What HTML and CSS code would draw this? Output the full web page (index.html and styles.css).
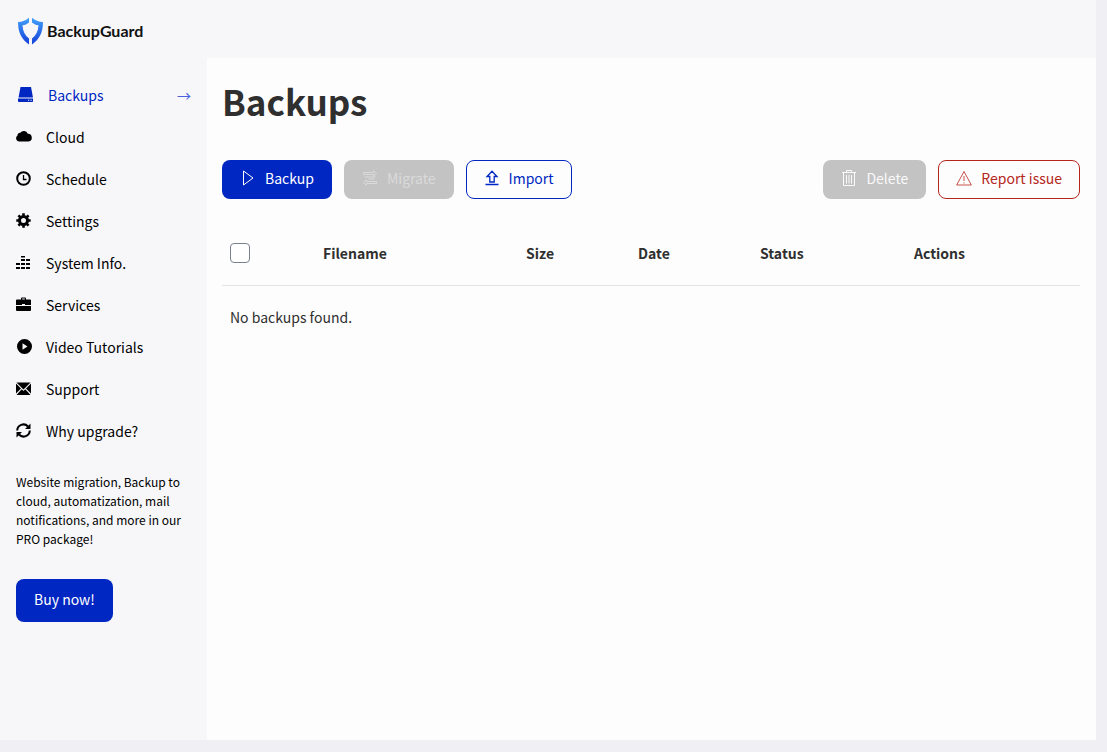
FILE: index.html
```html
<!DOCTYPE html>
<html lang="en">
<head>
  <meta charset="UTF-8">
  <meta name="viewport" content="width=device-width, initial-scale=1">
  <title>BackupGuard - Backups</title>
  <link rel="stylesheet" href="styles.css">
</head>
<body>
  <div class="app">
    <header class="topbar">
      <a class="logo" href="#">
        <svg width="26" height="28" viewBox="0 0 26 28">
          <defs>
            <linearGradient id="shield" x1="0" y1="0" x2="0" y2="1">
              <stop offset="0" stop-color="#41a0fa"/>
              <stop offset="1" stop-color="#1440d8"/>
            </linearGradient>
          </defs>
          <path fill="url(#shield)" d="M12 .8v4.700C10 7.200 8 8 5.500 8.300c.3 6 2.500 10.200 6.500 13.200V27.500C5 22.500 1 16 1 5 5.500 5 9 3.500 12 .8z"/>
          <path fill="url(#shield)" d="M15 .8v4.700c2 1.700 4 2.500 6.500 2.800-.3 6-2.500 10.200-6.500 13.200V27.500C22 22.500 26 16 26 5 21.500 5 18 3.500 15 .8z"/>
        </svg>
        <span>BackupGuard</span>
      </a>
    </header>

    <aside class="sidebar">
      <nav>
        <ul class="menu">
          <li><a class="active" href="#">
            <svg viewBox="0 0 16 16"><path d="M2.500 0h10.500l2 10.500H.5z"/><path fill-rule="evenodd" d="M0 11.500h15v2.700a.8.8 0 0 1-.8.8H.8a.8.8 0 0 1-.8-.8zm10 1.200v1h1.200v-1zm2.500 0v1h1.200v-1z"/></svg>
            <span>Backups</span><span class="arrow">→</span></a></li>
          <li><a href="#">
            <svg viewBox="0 0 16 16"><path d="M3.300 12.500A3.300 3.300 0 0 1 1.500 6.500 2.500 2.500 0 0 1 4.300 3.800 4.300 4.300 0 0 1 11.800 4.700 3.900 3.900 0 0 1 12 12.500z"/></svg>
            <span>Cloud</span></a></li>
          <li><a href="#">
            <svg viewBox="0 0 16 16"><circle cx="7.500" cy="7.500" r="6.300" fill="none" stroke="currentColor" stroke-width="2"/><path fill="none" stroke="currentColor" stroke-width="1.300" d="M7.500 4v4.500h3"/></svg>
            <span>Schedule</span></a></li>
          <li><a href="#">
            <svg viewBox="0 0 16 16"><circle cx="7.500" cy="7.500" r="4" fill="none" stroke="currentColor" stroke-width="3"/><path stroke="currentColor" stroke-width="2.600" d="M7.500.3v2.500M7.500 12.200v2.500M.3 7.500h2.500M12.200 7.500h2.500M2.400 2.400l1.800 1.800M10.800 10.800l1.800 1.800M2.400 12.600l1.800-1.800M10.800 4.200l1.800-1.800"/></svg>
            <span>Settings</span></a></li>
          <li><a href="#">
            <svg viewBox="0 0 16 16"><path d="M0 12h4v2H0zM0 8h4v2H0zM5 12h4v2H5zM5 8h4v2H5zM5 4h4v2H5zM5 1h4v1.500H5zM10 12h4v2h-4zM10 8h4v2h-4zM10 4h4v2h-4z"/></svg>
            <span>System Info.</span></a></li>
          <li><a href="#">
            <svg viewBox="0 0 16 16"><path fill-rule="evenodd" d="M5 2.500V1.500a1 1 0 0 1 1-1h3a1 1 0 0 1 1 1v1h4a1 1 0 0 1 1 1V8H9V7H6v1H0V3.500a1 1 0 0 1 1-1zm1.200 0h2.600v-1H6.200z"/><path d="M0 9h15v4a1 1 0 0 1-1 1H1a1 1 0 0 1-1-1z"/></svg>
            <span>Services</span></a></li>
          <li><a href="#">
            <svg viewBox="0 0 16 16"><path fill-rule="evenodd" d="M8.500 0a7.500 7.500 0 1 1 0 15 7.500 7.500 0 0 1 0-15zM6.500 4.200v6.600l5-3.300z"/></svg>
            <span>Video Tutorials</span></a></li>
          <li><a href="#">
            <svg viewBox="0 0 16 16"><path d="M.5 1.500h14L7.500 8.500zM0 2.500l5 5-5 5zM15 2.500v10l-5-5zM5.700 8.300l1.800 1.800 1.800-1.800L14.500 14H.5z"/></svg>
            <span>Support</span></a></li>
          <li><a href="#">
            <svg viewBox="0 0 16 16"><path fill="none" stroke="currentColor" stroke-width="2" d="M1.200 7.500A6.200 6.200 0 0 1 12 3.500M13.800 7.500A6.200 6.200 0 0 1 3 11.500"/><path d="M14.500.5V6H9zM.5 14.500V9H6z"/></svg>
            <span>Why upgrade?</span></a></li>
        </ul>
      </nav>
      <p class="promo">Website migration, Backup to cloud, automatization, mail notifications, and more in our PRO package!</p>
      <button type="button" class="btn btn-primary btn-buy">Buy now!</button>
    </aside>

    <main class="content">
      <h1>Backups</h1>
      <div class="toolbar">
        <button type="button" class="btn btn-primary">
          <svg viewBox="0 0 16 16"><path d="M3.500 1v14L13 8z"/></svg>Backup</button>
        <button type="button" class="btn btn-disabled btn-migrate" disabled>
          <svg viewBox="0 0 16 16"><path d="M1.500 2.500h10V.8l3 2.700-3 2.700V4.500h-10zM14.500 11.500h-10V9.800l-3 2.700 3 2.700v-1.700h10zM13.500 7h-11M12.500 9h-6"/></svg>Migrate</button>
        <button type="button" class="btn btn-outline">
          <svg viewBox="0 0 16 16"><path stroke-width="1.300" d="M8 1.200L3 6.500h2.800V12h4.400V6.500H13zM1.500 14.500h13"/></svg>Import</button>
        <button type="button" class="btn btn-disabled btn-delete" disabled>
          <svg viewBox="0 0 16 16"><path d="M1 2.500h14M5.500 2.500v-2h5v2M2.500 3v12.500h11V3M5.500 5v8.500M8 5v8.500M10.500 5v8.500"/></svg>Delete</button>
        <button type="button" class="btn btn-danger">
          <svg viewBox="0 0 16 16"><path stroke-width=".8" d="M8 1.500L.7 15h14.600zM8 6v5M8 12.500v1"/></svg>Report issue</button>
      </div>

      <table class="backups">
        <colgroup>
          <col class="col-check"><col class="col-name"><col class="col-size"><col class="col-date"><col class="col-status"><col>
        </colgroup>
        <thead>
          <tr>
            <th><input type="checkbox" aria-label="Select all backups"></th>
            <th>Filename</th>
            <th>Size</th>
            <th>Date</th>
            <th>Status</th>
            <th>Actions</th>
          </tr>
        </thead>
        <tbody>
          <tr>
            <td colspan="6">No backups found.</td>
          </tr>
        </tbody>
      </table>
    </main>
  </div>
</body>
</html>
```
FILE: styles.css
```css
* { box-sizing: border-box; }

body {
  margin: 0;
  background: #f0f0f4;
  color: #2f2f2f;
  font-family: "Noto Sans CJK JP", "Noto Sans", sans-serif;
  font-size: 14px;
  line-height: 20px;
}

a { color: inherit; text-decoration: none; }
svg { display: block; flex: none; }

.app {
  display: grid;
  grid-template-columns: 207px 1fr;
  grid-template-rows: 58px 1fr;
  min-height: calc(100vh - 12px);
  margin: 0 11px 12px 0;
  background: #f7f7fa;
}

.topbar { grid-column: 1 / -1; padding: 17px 16px 0 17px; }
.logo { display: inline-flex; align-items: center; gap: 4px; color: #111; font-family: Lato, sans-serif; font-size: 16px; font-weight: 700; }

/* sidebar */
.sidebar { padding: 17px 16px; color: #000; }
.menu { margin: 0; padding: 0; list-style: none; }
.menu a { display: flex; align-items: center; height: 42px; padding-bottom: 2px; }
.menu svg { width: 16px; height: 16px; margin: 0 14px 1px 0; fill: currentColor; }
.menu .active { padding-left: 2px; color: #0027c2; }
.arrow { margin-left: auto; color: #4a63dc; }

.promo { margin: 19px 0 31px; font-size: 12px; line-height: 19px; }

/* buttons */
.btn {
  display: inline-flex;
  align-items: center;
  justify-content: center;
  gap: 9px;
  height: 39px;
  padding: 0 17px 3px;
  border: 1px solid transparent;
  border-radius: 8px;
  background: #fdfdfd;
  font-family: inherit;
  font-size: 14px;
  cursor: pointer;
}
.btn svg { width: 16px; height: 16px; fill: none; stroke: currentColor; }
.btn-primary { background: #0027c2; color: #fff; }
.btn-outline { border-color: #0027c2; color: #0027c2; }
.btn-danger { border-color: #b5261c; color: #b5261c; }
.btn-disabled { background: #c3c3c3; color: #fafafa; cursor: default; }
.btn-migrate { color: #dadada; }
.btn-delete { margin-left: auto; }
.btn-buy { height: 43px; }

/* main area */
.content { padding: 13px 16px 16px 15px; background: #fdfdfd; }
h1 { margin: 0 0 29px; font-size: 35px; line-height: 60px; }
.toolbar { display: flex; gap: 12px; }

.backups { width: 100%; margin-top: 22px; border-collapse: collapse; table-layout: fixed; }
.backups th, .backups td { height: 64px; padding: 0 8px; text-align: left; vertical-align: middle; }
.backups th { border-bottom: 1px solid #e5e5e5; font-weight: 700; }
.col-check { width: 93px; }
.col-name { width: 203px; }
.col-size { width: 112px; }
.col-date { width: 122px; }
.col-status { width: 154px; }

.backups input {
  display: block;
  width: 20px;
  height: 20px;
  margin: 0;
  border: 1px solid #7b8190;
  border-radius: 4px;
  background: #fff;
  appearance: none;
}
.backups input:checked { background: #0027c2; }
```
